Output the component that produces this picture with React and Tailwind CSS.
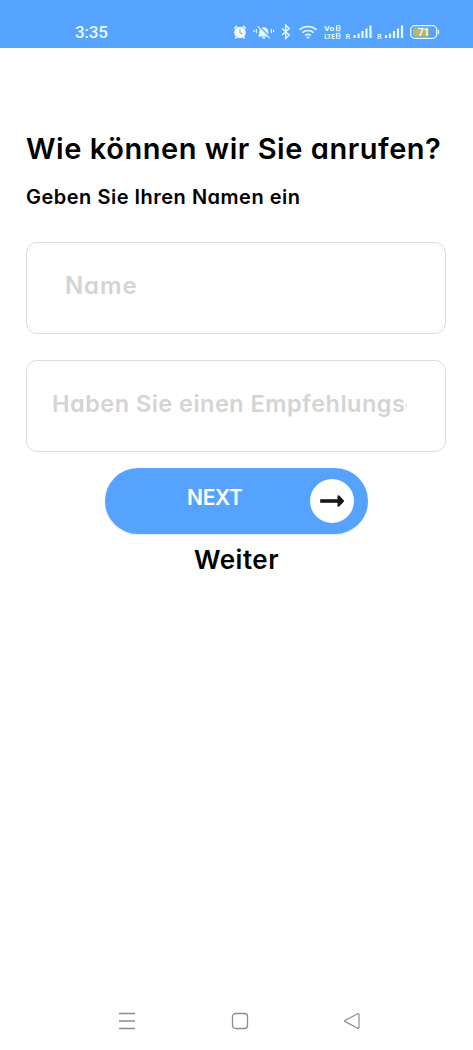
import React from 'react';

function StatusIcons() {
  return (
    <svg className="block h-5 w-[210px]" viewBox="232 22 210 20" fill="none" stroke="#e4fbff">
      <circle cx="240" cy="32.5" r="5.8" fill="#f2fbff" stroke="none" />
      <path d="M234.2 28.5l3-2.7M245.8 28.5l-3-2.7M236.5 37l-1.2 1.6M243.5 37l1.2 1.6" strokeWidth="1.6" />
      <path d="M240 29.3v3.4l2.2 1.6" stroke="#a9a8a0" strokeWidth="1.1" />

      <path d="M257.800 36.500c1.200-1 1.500-2.400 1.500-4.300 0-2.800 1.700-5 4.500-5s4.500 2.200 4.500 5c0 1.900.3 3.300 1.500 4.300z" fill="#e4fbff" stroke="none" />
      <path d="M262.300 37.800h3" strokeWidth="1.500" />
      <path d="M258.300 25.800l12 12" stroke="#55a2ff" strokeWidth="2" />
      <path d="M257.600 26.200l12.200 12.200" strokeWidth="1.200" />
      <path d="M256.400 29v4M254 30v2M271.400 29v4M273.600 30v2" strokeWidth="1.200" />

      <path d="M282 28.500l7.300 6.500-3.600 3.400V25.200l3.600 3.400-7.300 6.500" strokeWidth="1.400" />

      <path d="M299.600 29.700c4.800-4.300 12-4.300 16.800 0M302.400 32.600c3.200-2.800 8-2.800 11.200 0M305.200 35.400c1.700-1.300 3.900-1.300 5.600 0" strokeWidth="1.700" />
      <path d="M308 39l-1.800-2c1-.8 2.600-.8 3.600 0z" fill="#e4fbff" stroke="none" />

      <g fill="#e4fbff" stroke="none" fontFamily="Roboto, sans-serif" fontWeight="700">
        <text x="324" y="30.800" fontSize="7" textLength="10.500" lengthAdjust="spacingAndGlyphs">Vo</text>
        <text x="324.200" y="38.600" fontSize="7" textLength="11" lengthAdjust="spacingAndGlyphs">LTE</text>
        <text x="345.500" y="38.500" fontSize="7">R</text>
        <text x="377" y="38.500" fontSize="7">R</text>
      </g>
      <path d="M336.500 25.700h3.500v5h-3.500zM336.500 28.200h3.500M336.500 33.300h3.500v5h-3.500zM336.500 35.800h3.500" strokeWidth="1" />

      <path d="M354.500 35V38M358.500 33.500V38M362.500 31V38M366.500 28.500V38M370.500 25.500V38" strokeWidth="2.200" />
      <path d="M386 35V38M390 33.500V38M394 31V38M398 28.500V38M402 25.500V38" strokeWidth="2.200" />

      <rect x="410.700" y="25.700" width="26" height="12.600" rx="4" strokeWidth="1.300" />
      <rect x="413" y="27.500" width="16" height="9" rx="2" fill="#b5b968" stroke="none" />
      <path d="M438.500 30v4" strokeWidth="1.300" />
      <text x="418" y="36" fontSize="11" fontWeight="500" fontFamily="Roboto, sans-serif" fill="#ffffff" stroke="none" textLength="11.500" lengthAdjust="spacingAndGlyphs">71</text>
    </svg>
  );
}

function StatusBar() {
  return (
    <header className="flex h-12 shrink-0 items-start bg-[#55a2ff] pl-[75px] pt-[22px]">
      <span className="w-[157px] font-['Roboto',sans-serif] text-[17px] leading-5 font-medium tracking-[-0.2px] text-[#e4fbff]">3:35</span>
      <StatusIcons />
    </header>
  );
}

function NavigationBar() {
  return (
    <nav className="mt-auto mb-5 flex shrink-0 items-center justify-between pr-[112px] pl-[118px] text-[#8c8c8c]">
      <svg className="size-[18px]" viewBox="0 0 18 18" fill="none" stroke="currentColor" strokeWidth="1.300">
        <path d="M1 1.500h16M1 9h16M1 16.500h16" />
      </svg>
      <svg className="size-[18px]" viewBox="0 0 18 18" fill="none" stroke="currentColor" strokeWidth="1.300">
        <rect x="1.500" y="1.500" width="15" height="15" rx="3" />
      </svg>
      <svg className="size-[18px]" viewBox="0 0 18 18" fill="none" stroke="currentColor" strokeWidth="1.200" strokeLinejoin="round">
        <path d="M2.200 8.300 14.700 1.700q1.300-.5 1.300.800v13q0 1.300-1.300.700L2.200 9.600q-1.200-.6 0-1.300z" />
      </svg>
    </nav>
  );
}

export default function App() {
  return (
    <div className="flex h-[1050px] w-[473px] flex-col overflow-hidden bg-white font-['Inter',sans-serif] text-black [font-feature-settings:'cv11','ss03']">
      <StatusBar />
      <main className="flex flex-col px-[26px] pt-[81px]">
        <h1 className="h-10 text-[29px] leading-10 font-semibold tracking-[0.54px] whitespace-nowrap">Wie können wir Sie anrufen?</h1>
        <p className="mt-[13px] h-[30px] text-[20px] leading-[30px] font-semibold tracking-[0.5px] whitespace-nowrap">Geben Sie Ihren Namen ein</p>
        <div className="mt-[30px] h-[92px] w-[420px] rounded-[11px] border border-[#dcdcdc] pt-[27px] pr-[38px] pl-[38px]">
          <input aria-label="Name" placeholder="Name" className="block h-8 w-full bg-transparent text-[24px] leading-8 font-semibold tracking-[0.9px] outline-none placeholder:text-[#d4d4d4]" />
        </div>
        <div className="mt-[26px] h-[92px] w-[420px] rounded-[11px] border border-[#dcdcdc] pt-[27px] pr-[38px] pl-[25px]">
          <input aria-label="Empfehlungscode" placeholder="Haben Sie einen Empfehlungscode?" className="block h-8 w-full bg-transparent text-[23.500px] leading-8 font-semibold tracking-[0.48px] outline-none placeholder:text-[#d4d4d4]" />
        </div>
        <button className="mt-4 ml-[79px] flex h-[66px] w-[263px] items-center rounded-full bg-[#55a2ff] pl-[82px] text-white shadow-[0_1px_2px_#d8e9ff]">
          <span className="mb-1.5 w-[123px] text-left text-[21px] leading-8 font-semibold tracking-[-0.3px]">NEXT</span>
          <span className="flex size-11 items-center justify-center rounded-full bg-white">
            <svg className="h-4 w-6" viewBox="0 0 24 16" fill="none" stroke="#171717">
              <path d="M0.200 8h20" strokeWidth="3.600" />
              <path d="M18.500 3.200 23 8l-4.500 4.800z" fill="#171717" strokeWidth="2" strokeLinejoin="round" />
            </svg>
          </span>
        </button>
        <button className="mt-2 self-center text-[26px] leading-9 font-semibold tracking-[0.5px]">Weiter</button>
      </main>
      <NavigationBar />
    </div>
  );
}
